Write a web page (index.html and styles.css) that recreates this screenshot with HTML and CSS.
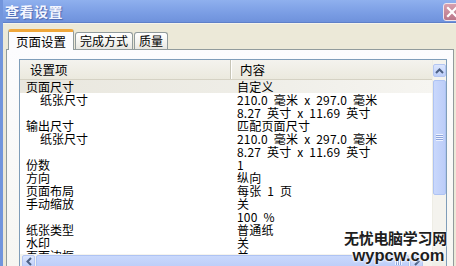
FILE: index.html
```html
<!DOCTYPE html>
<html lang="zh-CN">
<head>
<meta charset="utf-8">
<title>查看设置</title>
<link rel="stylesheet" href="styles.css">
</head>
<body>
<div class="window">
  <div class="titlebar">
    <span class="title">查看设置</span>
    <span class="close"><svg width="14" height="14" viewBox="0 0 14 14"><path d="M3 3 L11 11 M11 3 L3 11" stroke="#fff" stroke-width="2.2" stroke-linecap="square"/></svg></span>
  </div>
  <div class="body">
    <div class="tabs">
      <div class="tab active">页面设置</div>
      <div class="tab">完成方式</div>
      <div class="tab">质量</div>
    </div>
    <div class="panel">
      <div class="listview">
        <div class="content">
          <div class="header">
            <div class="hcell first">设置项</div>
            <div class="hcell">内容</div>
          </div>
          <div class="row sel"><span>页面尺寸</span><span class="val">自定义</span></div>
          <div class="row"><span class="ind">纸张尺寸</span><span class="val">210.0 毫米 x 297.0 毫米</span></div>
          <div class="row"><span></span><span class="val">8.27 英寸 x 11.69 英寸</span></div>
          <div class="row"><span>输出尺寸</span><span class="val">匹配页面尺寸</span></div>
          <div class="row"><span class="ind">纸张尺寸</span><span class="val">210.0 毫米 x 297.0 毫米</span></div>
          <div class="row"><span></span><span class="val">8.27 英寸 x 11.69 英寸</span></div>
          <div class="row"><span>份数</span><span class="val">1</span></div>
          <div class="row"><span>方向</span><span class="val">纵向</span></div>
          <div class="row"><span>页面布局</span><span class="val">每张 1 页</span></div>
          <div class="row"><span>手动缩放</span><span class="val">关</span></div>
          <div class="row"><span></span><span class="val">100 %</span></div>
          <div class="row"><span>纸张类型</span><span class="val">普通纸</span></div>
          <div class="row"><span>水印</span><span class="val">关</span></div>
          <div class="row"><span>页面边框</span><span class="val">关</span></div>
        </div>
        <div class="vscroll">
          <div class="sbtn up"><svg width="9" height="6" viewBox="0 0 9 6"><path d="M1 5 L4.5 1.5 L8 5" fill="none" stroke="#4d6185" stroke-width="2"/></svg></div>
          <div class="vthumb"><span class="grip-v"></span></div>
        </div>
        <div class="hscroll">
          <div class="sbtn left"><svg width="6" height="9" viewBox="0 0 6 9"><path d="M5 1 L1.5 4.5 L5 8" fill="none" stroke="#4d6185" stroke-width="2"/></svg></div>
          <div class="hthumb"><span class="grip-h"></span></div>
          <div class="sbtn right"><svg width="6" height="9" viewBox="0 0 6 9"><path d="M1 1 L4.5 4.5 L1 8" fill="none" stroke="#4d6185" stroke-width="2"/></svg></div>
        </div>
        <div class="corner"></div>
      </div>
    </div>
  </div>
  <div class="watermark">
    <div class="wm1">无忧电脑学习网</div>
    <div class="wm2">wypcw.com</div>
  </div>
</div>
</body>
</html>
```

FILE: styles.css
```css
* { box-sizing: border-box; }
html, body { margin: 0; padding: 0; }
body {
  width: 456px;
  height: 266px;
  overflow: hidden;
  font-family: "Noto Sans CJK SC", "Liberation Sans", sans-serif;
  font-size: 12px;
  color: #000;
  background: #ece9d8;
}
.window {
  position: relative;
  width: 456px;
  height: 266px;
  display: flex;
  flex-direction: column;
  border-left: 3px solid #7295dc;
  overflow: hidden;
}
.titlebar {
  height: 23px;
  flex: none;
  display: flex;
  align-items: center;
  justify-content: space-between;
  background: linear-gradient(#8fb0ee, #7a9de4 60%, #6f92dc);
  border-bottom: 1px solid #5f80c8;
}
.title {
  padding-left: 2px;
  font-size: 14px;
  font-weight: bold;
  color: #f4f6ff;
  text-shadow: 1px 1px 1px #4a66b0;
  letter-spacing: 0.5px;
}
.close {
  width: 18px;
  height: 18px;
  margin-right: -5px;
  margin-top: 1px;
  display: flex;
  align-items: center;
  justify-content: center;
  background: linear-gradient(#d7a0ae, #b9778a);
  border: 1px solid #f2e6ea;
  border-radius: 3px;
}
.body {
  flex: 1;
  background: #ece9d8;
  padding: 5px 0 0 3px;
  display: flex;
  flex-direction: column;
  border-top: 1px solid #f6f4ea;
}
.tabs {
  display: flex;
  align-items: flex-end;
  height: 20px;
  padding-left: 2px;
  position: relative;
  z-index: 1;
}
.tab {
  height: 17px;
  padding: 0 4px 0 4px;
  margin-right: 1px;
  line-height: 16px;
  font-size: 12px;
  background: linear-gradient(#ffffff, #f3f3ef 60%, #e8e7e1);
  border: 1px solid #919b9c;
  border-bottom: none;
  border-radius: 3px 3px 0 0;
}
.tab.active {
  height: 21px;
  margin-bottom: -1px;
  padding: 0 7px;
  line-height: 19px;
  background: #fcfcfe;
  border-top: 3px solid #f0a83c;
  font-size: 12.5px;
}
.panel {
  flex: 1;
  margin-right: 2px;
  background: linear-gradient(#fcfcfe, #f6f6f2);
  border: 1px solid #919b9c;
  padding: 9px 6px 0 12px;
  display: flex;
  flex-direction: column;
}
.listview {
  border: 1px solid #7f9db9;
  background: #fff;
  display: grid;
  grid-template-columns: 1fr 14px;
  grid-template-rows: 194px 14px;
  height: 210px;
}
.content {
  overflow: hidden;
}
.header {
  display: grid;
  grid-template-columns: 211px 1fr;
  height: 20px;
  background: linear-gradient(#f4f3ee, #ebe9de);
  border-bottom: 1px solid #d5d2c4;
}
.hcell {
  padding-left: 9px;
  line-height: 19px;
  font-size: 12.5px;
}
.hcell.first {
  padding-left: 10px;
  border-right: 1px solid #c7c5b7;
  box-shadow: 1px 0 0 #fff;
}
.row {
  display: grid;
  grid-template-columns: 211px 1fr;
  height: 13px;
  line-height: 13px;
  white-space: nowrap;
}
.row span { padding-left: 6px; }
.row span.ind { padding-left: 20px; }
.row span.val { padding-left: 6px; word-spacing: 3px; letter-spacing: 0.2px; }
.row.sel { background: linear-gradient(90deg, #e9e7de, #efeee8 60%, #f6f5f1); }
.vscroll {
  grid-row: 1;
  grid-column: 2;
  background: #f4f3ee;
  border-left: 1px solid #eeede5;
  display: flex;
  flex-direction: column;
  align-items: center;
  padding-top: 4px;
}
.sbtn {
  width: 13px;
  height: 13px;
  flex: none;
  display: flex;
  align-items: center;
  justify-content: center;
  background: linear-gradient(#dce6fd, #bccefa);
  border: 1px solid #b4c6f2;
  border-radius: 2px;
}
.vthumb {
  margin-top: 3px;
  width: 13px;
  height: 115px;
  background: linear-gradient(90deg, #c9d8fc, #bccdf8);
  border: 1px solid #aec3f3;
  border-radius: 2px;
  display: flex;
  align-items: center;
  justify-content: center;
}
.grip-v {
  width: 7px;
  height: 7px;
  background: repeating-linear-gradient(#eef3ff 0 1px, #8ea5db 1px 2px);
}
.hscroll {
  grid-row: 2;
  grid-column: 1;
  background: #f4f3ee;
  display: flex;
  align-items: center;
  padding-left: 2px;
  gap: 1px;
}
.hthumb {
  width: 373px;
  height: 13px;
  background: linear-gradient(#c9d8fc, #bccdf8);
  border: 1px solid #aec3f3;
  border-radius: 2px;
  display: flex;
  align-items: center;
  justify-content: flex-end;
  padding-right: 6px;
}
.grip-h {
  width: 7px;
  height: 7px;
  background: repeating-linear-gradient(90deg, #eef3ff 0 1px, #8ea5db 1px 2px);
}
.corner {
  grid-row: 2;
  grid-column: 2;
  background: #f0efe8;
}
.watermark {
  position: absolute;
  left: 341px;
  top: 229px;
  display: flex;
  flex-direction: column;
  align-items: center;
  color: #1e1e1e;
  font-weight: bold;
  text-shadow: 0 0 2px #fff, 0 0 2px #fff, 0 0 3px #fff;
}
.wm1 {
  font-size: 15px;
  line-height: 18px;
  letter-spacing: -0.3px;
}
.wm2 {
  font-family: "Liberation Sans", sans-serif;
  font-size: 16.5px;
  line-height: 16px;
  margin-left: 6px;
}
```
